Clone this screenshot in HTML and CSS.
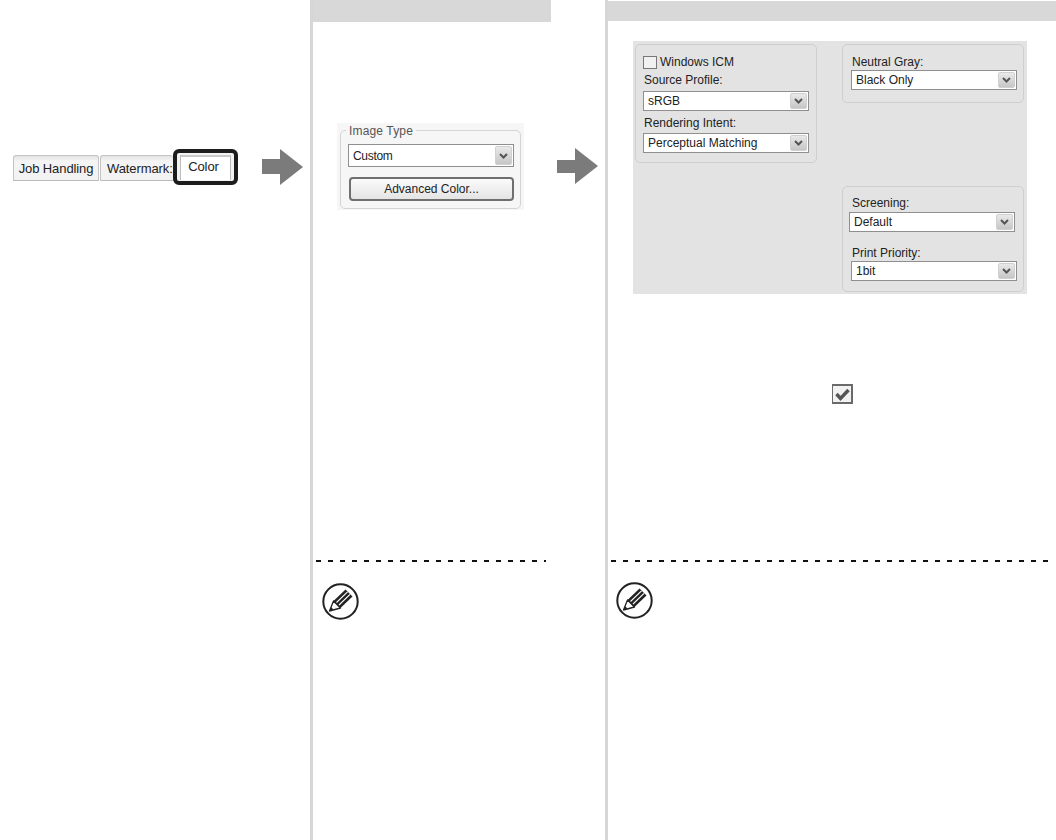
FILE: index.html
```html
<!DOCTYPE html>
<html lang="en">
<head>
<meta charset="utf-8">
<title>Color settings</title>
<link rel="stylesheet" href="styles.css">
</head>
<body>
<div class="page">
  <section class="col col-a">
    <div class="tabs-row">
      <div class="tabs">
        <div class="tab tab-job">Job Handling</div>
        <div class="tab tab-water">Watermark:</div>
        <div class="tab-ring"><div class="tab-color">Color</div></div>
      </div>
      <svg class="arrow arrow-a" viewBox="0 0 41 36"><path d="M0 10H18V0L41 18 18 36V25H0Z"/></svg>
    </div>
  </section>

  <section class="col col-b">
    <div class="head head-b"></div>
    <div class="body-b">
      <div class="imgtype-wrap">
        <div class="fieldset">
          <div class="legend">Image Type</div>
          <div class="select sel-type"><span>Custom</span><i class="drop"><svg viewBox="0 0 9 6"><path d="M1 1l3.500 3.500L8 1"/></svg></i></div>
          <div class="button">Advanced Color...</div>
        </div>
      </div>
      <svg class="arrow arrow-b" viewBox="0 0 41 36"><path d="M0 12H18V0L41 18 18 36V25H0Z"/></svg>
    </div>
    <div class="dash dash-b"></div>
    <svg class="note" viewBox="0 0 37 37"><use href="#pencil"/></svg>
  </section>

  <section class="col col-c">
    <div class="head head-c"></div>
    <div class="panel">
      <div class="group g-left">
        <div class="check-row"><span class="cb"></span><span>Windows ICM</span></div>
        <div class="lbl lbl-src">Source Profile:</div>
        <div class="select sel sel-src"><span>sRGB</span><i class="drop"><svg viewBox="0 0 9 6"><path d="M1 1l3.500 3.500L8 1"/></svg></i></div>
        <div class="lbl lbl-ren">Rendering Intent:</div>
        <div class="select sel sel-ren"><span>Perceptual Matching</span><i class="drop"><svg viewBox="0 0 9 6"><path d="M1 1l3.500 3.500L8 1"/></svg></i></div>
      </div>
      <div class="right">
        <div class="group g-neutral">
          <div class="lbl lbl-neu">Neutral Gray:</div>
          <div class="select sel sel-neu"><span>Black Only</span><i class="drop"><svg viewBox="0 0 9 6"><path d="M1 1l3.500 3.500L8 1"/></svg></i></div>
        </div>
        <div class="group g-screen">
          <div class="lbl lbl-scr">Screening:</div>
          <div class="select sel sel-scr"><span>Default</span><i class="drop"><svg viewBox="0 0 9 6"><path d="M1 1l3.500 3.500L8 1"/></svg></i></div>
          <div class="lbl lbl-pri">Print Priority:</div>
          <div class="select sel sel-pri"><span>1bit</span><i class="drop"><svg viewBox="0 0 9 6"><path d="M1 1l3.500 3.500L8 1"/></svg></i></div>
        </div>
      </div>
    </div>
    <div class="check-line">
      <svg class="checked" viewBox="0 0 21 20"><rect width="21" height="20" fill="#6a6a6a"/><rect x="1" y="2" width="18" height="16" fill="#f2f2f2"/><path d="M4.500 10l4 4.500 8-8.500" fill="none" stroke="#555" stroke-width="3.400"/></svg>
    </div>
    <div class="dash dash-c"></div>
    <svg class="note" viewBox="0 0 37 37"><use href="#pencil"/></svg>
  </section>
</div>

<svg class="defs" width="0" height="0" aria-hidden="true">
  <symbol id="pencil" viewBox="0 0 37 37">
    <circle cx="18.500" cy="18.500" r="17.200" fill="#fff" stroke="#222" stroke-width="2"/>
    <path d="M11.500 18L7.500 28l11-3Z" fill="#fff" stroke="#222" stroke-width="1.300" stroke-linejoin="round"/>
    <path d="M11.500 18L23.500 6.500 30.500 13.500 18.500 25Z" fill="#222"/>
    <path d="M14.500 19.500L25.500 8.800M17 22L28 11.300" fill="none" stroke="#fff" stroke-width="1.100"/>
    <path d="M7.500 28l1.500-4 2.500 2.500Z" fill="#222"/>
  </symbol>
</svg>
</body>
</html>
```
FILE: styles.css
```css
* { box-sizing: border-box; }
html, body { margin: 0; padding: 0; background: #fff; }
body { font-family: "Liberation Sans", Arial, sans-serif; color: #222; }
.page { display: flex; width: 1056px; height: 840px; overflow: hidden; }
.defs { display: block; height: 0; }
.col { flex: none; height: 840px; }
.col-a { width: 310px; padding-top: 149px; }
.col-b { width: 295px; border-left: 3px solid #d6d6d6; }
.col-c { width: 451px; border-left: 3px solid #d6d6d6; }

.head { background: #d8d8d8; }
.head-b { width: 238px; height: 22px; }
.head-c { height: 20px; margin-top: 1px; }

.tabs-row { display: flex; align-items: flex-start; }
.tabs { display: flex; align-items: flex-start; width: 226px; margin-left: 12px; padding-top: 6px; }
.tab { height: 26px; font-size: 13px; line-height: 25px; text-align: center; background: linear-gradient(#e4e4e4, #f4f4f4 5px, #f2f2f2); border: 1px solid #c4c4c4; border-bottom-color: #bbb; border-radius: 3px 3px 0 0; color: #222; white-space: nowrap; letter-spacing: -.1px; }
.tab-job { width: 86px; margin-left: 1px; }
.tab-water { width: 73px; margin-left: 1px; overflow: hidden; border-right: 0; padding-left: 6px; text-align: left; }
.tab-ring { margin-top: -6px; width: 65px; height: 36px; border: 4px solid #1c1c1c; border-radius: 6px; padding: 2px 3px 0; background: #f2f2f2; }
.tab-color { height: 25px; padding-right: 4px; background: #fff; border: 1px solid #bbb; border-top: 2px solid #c8c8c8; border-bottom: 0; font-size: 13px; line-height: 20px; text-align: center; letter-spacing: -.1px; }
.arrow { display: block; flex: none; fill: #7b7b7b; width: 41px; height: 36px; }
.arrow-a { margin-left: 24px; }

.body-b { display: flex; align-items: flex-start; height: 538px; padding: 101px 0 0 24px; }
.imgtype-wrap { width: 187px; height: 87px; padding: 7px 3px 1px; background: #f6f6f6; }
.fieldset { position: relative; height: 79px; padding: 13px 6px 0 8px; border: 1px solid #d4d4d4; border-radius: 5px; }
.legend { position: absolute; left: 5px; top: -6px; padding: 0 3px; background: #f6f6f6; font-size: 12px; line-height: 13px; color: #555; letter-spacing: .15px; }
.select { display: flex; align-items: center; justify-content: space-between; background: #fff; border: 1px solid #8f8f8f; color: #222; font-size: 12px; }
.sel-type { height: 23px; margin-left: -1px; padding: 0 1px 0 4px; }
.sel-type span { letter-spacing: -.3px; }
.drop { display: flex; align-items: center; justify-content: center; width: 17px; height: 19px; background: linear-gradient(#e9e9e9, #c6c6c6); border: 1px solid #d0d0d0; border-radius: 2px; }
.drop svg { width: 9px; height: 6px; fill: none; stroke: #555; stroke-width: 2; }
.button { height: 24px; margin-top: 10px; border: 2px solid #6f6f6f; border-radius: 4px; background: linear-gradient(#fbfbfb, #e4e4e4); font-size: 12px; line-height: 20px; text-align: center; color: #222; }
.arrow-b { margin-left: 33px; margin-top: 25px; }

.dash { height: 2px; background: repeating-linear-gradient(90deg, #111 0 5px, transparent 5px 12px); }
.dash-b { width: 230px; margin-left: 3px; }
.dash-c { width: 439px; margin-left: 3px; }
.note { display: block; width: 37px; height: 37px; margin: 21px 0 0 9px; }
.col-c .note { margin: 20px 0 0 8px; }

.panel { display: flex; justify-content: space-between; width: 394px; height: 253px; margin: 20px 0 0 25px; padding: 3px 3px 2px 2px; background: #e3e3e3; font-size: 12px; color: #222; }
.group { border: 1px solid #cfcfcf; border-radius: 5px; }
.g-left { width: 182px; height: 119px; padding: 10px 7px 0 7px; }
.right { display: flex; flex-direction: column; justify-content: space-between; width: 182px; }
.g-neutral { height: 59px; padding: 10px 6px 0 8px; }
.g-screen { height: 106px; padding: 9px 6px 0 6px; }
.check-row { display: flex; align-items: center; gap: 3px; height: 14px; }
.cb { width: 14px; height: 13px; border: 1px solid #777; background: #f1f1f1; }
.lbl { font-size: 12px; line-height: 14px; color: #222; }
.lbl-src { margin: 4px 0 0 1px; }
.lbl-ren { margin: 5px 0 0 1px; }
.lbl-neu { margin-left: 1px; }
.lbl-scr { margin-left: 3px; }
.lbl-pri { margin: 14px 0 0 3px; }
.sel { height: 20px; padding: 0 1px 0 4px; font-size: 12px; }
.sel .drop { height: 16px; }
.sel-src { margin-top: 4px; }
.sel-ren { margin-top: 3px; }
.sel-neu { margin-top: 1px; }
.sel-scr { margin: 2px 2px 0 0; }
.sel-pri { margin: 1px 0 0 2px; }

.check-line { display: flex; height: 266px; padding: 90px 0 0 224px; }
.checked { display: block; width: 21px; height: 20px; }
```
